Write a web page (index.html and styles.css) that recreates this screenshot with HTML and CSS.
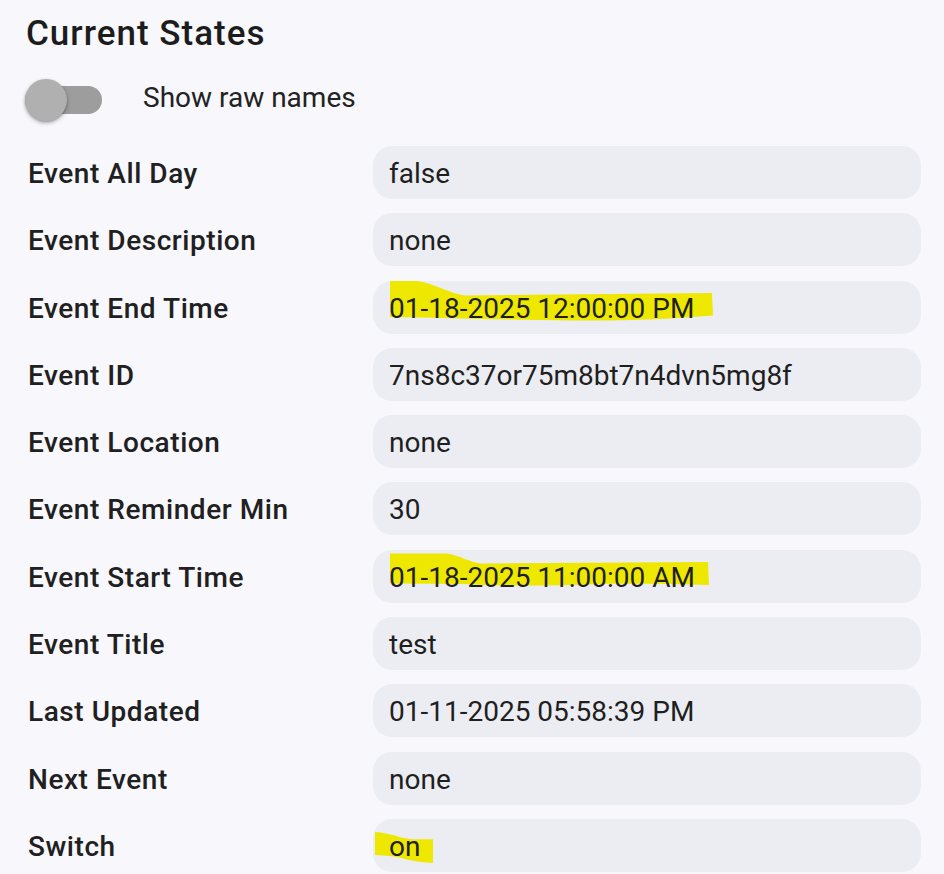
FILE: index.html
```html
<!DOCTYPE html>
<html>
<head>
<meta charset="utf-8">
<link rel="stylesheet" href="styles.css">
</head>
<body>
<div class="panel">
  <h1 class="title">Current States</h1>
  <div class="toggle-row">
    <div class="switch"><div class="track"></div><div class="knob"></div></div>
    <span class="toggle-label">Show raw names</span>
  </div>
  <div class="states">
    <div class="row"><div class="name">Event All Day</div><div class="value"><span class="txt">false</span></div></div>
    <div class="row"><div class="name">Event Description</div><div class="value"><span class="txt">none</span></div></div>
    <div class="row"><div class="name">Event End Time</div><div class="value">
      <svg class="hl" width="360" height="53" viewBox="0 0 360 53"><path d="M20 0 L44 0 C60 2 75 12 92 14.5 L339 12 L340 34.5 C300 38 250 40 200 39.5 C140 39 80 37 17 36 L17 0 Z"/></svg>
      <span class="txt">01-18-2025 12:00:00 PM</span></div></div>
    <div class="row"><div class="name">Event ID</div><div class="value"><span class="txt">7ns8c37or75m8bt7n4dvn5mg8f</span></div></div>
    <div class="row"><div class="name">Event Location</div><div class="value"><span class="txt">none</span></div></div>
    <div class="row"><div class="name">Event Reminder Min</div><div class="value"><span class="txt">30</span></div></div>
    <div class="row"><div class="name">Event Start Time</div><div class="value">
      <svg class="hl" width="360" height="53" viewBox="0 0 360 53"><path d="M17 3.5 L74 3.5 C88 6 96 12 108 13.5 L335 12 L336 35 C300 34 260 33.5 230 34 C170 36 120 36 90 34 L17 33.5 Z"/></svg>
      <span class="txt">01-18-2025 11:00:00 AM</span></div></div>
    <div class="row"><div class="name">Event Title</div><div class="value"><span class="txt">test</span></div></div>
    <div class="row"><div class="name">Last Updated</div><div class="value"><span class="txt">01-11-2025 05:58:39 PM</span></div></div>
    <div class="row"><div class="name">Next Event</div><div class="value"><span class="txt">none</span></div></div>
    <div class="row"><div class="name">Switch</div><div class="value">
      <svg class="hl" width="360" height="53" viewBox="0 0 360 53"><path d="M2 13 C10 13.5 16 15 22 16.5 C28 18.5 33 20 40 20.3 L60 20.3 L60 44 C50 43.5 42 42.5 34 40.5 C24 37.5 14 36.3 2 36 Z"/></svg>
      <span class="txt">on</span></div></div>
  </div>
</div>
</body>
</html>
```
FILE: styles.css
```css
html, body {
  margin: 0;
  padding: 0;
  background: #f7f7fc;
}
body {
  font-family: Roboto, "Liberation Sans", sans-serif;
  color: #1f1f1f;
}
.panel {
  padding: 13px 23px 0 25px;
}
.title {
  margin: 0;
  padding-left: 1px;
  font-size: 35px;
  line-height: 41px;
  font-weight: 500;
  letter-spacing: 1px;
  color: #1c1c1c;
}
.toggle-row {
  display: flex;
  align-items: center;
  margin-top: 25px;
  height: 42px;
}
.switch {
  position: relative;
  width: 77px;
  height: 42px;
  flex: none;
}
.track {
  position: absolute;
  left: 0;
  top: 7px;
  width: 77px;
  height: 28px;
  border-radius: 14px;
  background: #9d9d9d;
}
.knob {
  position: absolute;
  left: 0;
  top: 0;
  width: 42px;
  height: 42px;
  border-radius: 50%;
  background: #b0b0b0;
  box-shadow: 0 2px 4px rgba(0,0,0,0.28), 0 1px 2px rgba(0,0,0,0.18);
}
.toggle-label {
  margin-left: 41px;
  font-size: 28px;
  line-height: 33px;
  margin-bottom: 5px;
  color: #222;
}
.states {
  display: flex;
  flex-direction: column;
  gap: 14.3px;
  margin-top: 25px;
}
.row {
  display: flex;
  align-items: center;
  height: 53px;
}
.name {
  width: 345px;
  padding-left: 3px;
  padding-top: 2px;
  flex: none;
  font-size: 28px;
  font-weight: 500;
  letter-spacing: 0.55px;
  color: #202020;
}
.value {
  position: relative;
  flex: 1;
  height: 53px;
  display: flex;
  align-items: center;
  padding-left: 16px;
  border-radius: 19px;
  background: #ecedf2;
  font-size: 28px;
  color: #1f1f1f;
  overflow: hidden;
}
.txt {
  position: relative;
  top: 1px;
}
.hl {
  position: absolute;
  left: 0;
  top: 0;
}
.hl path {
  fill: #eee800;
}
```
